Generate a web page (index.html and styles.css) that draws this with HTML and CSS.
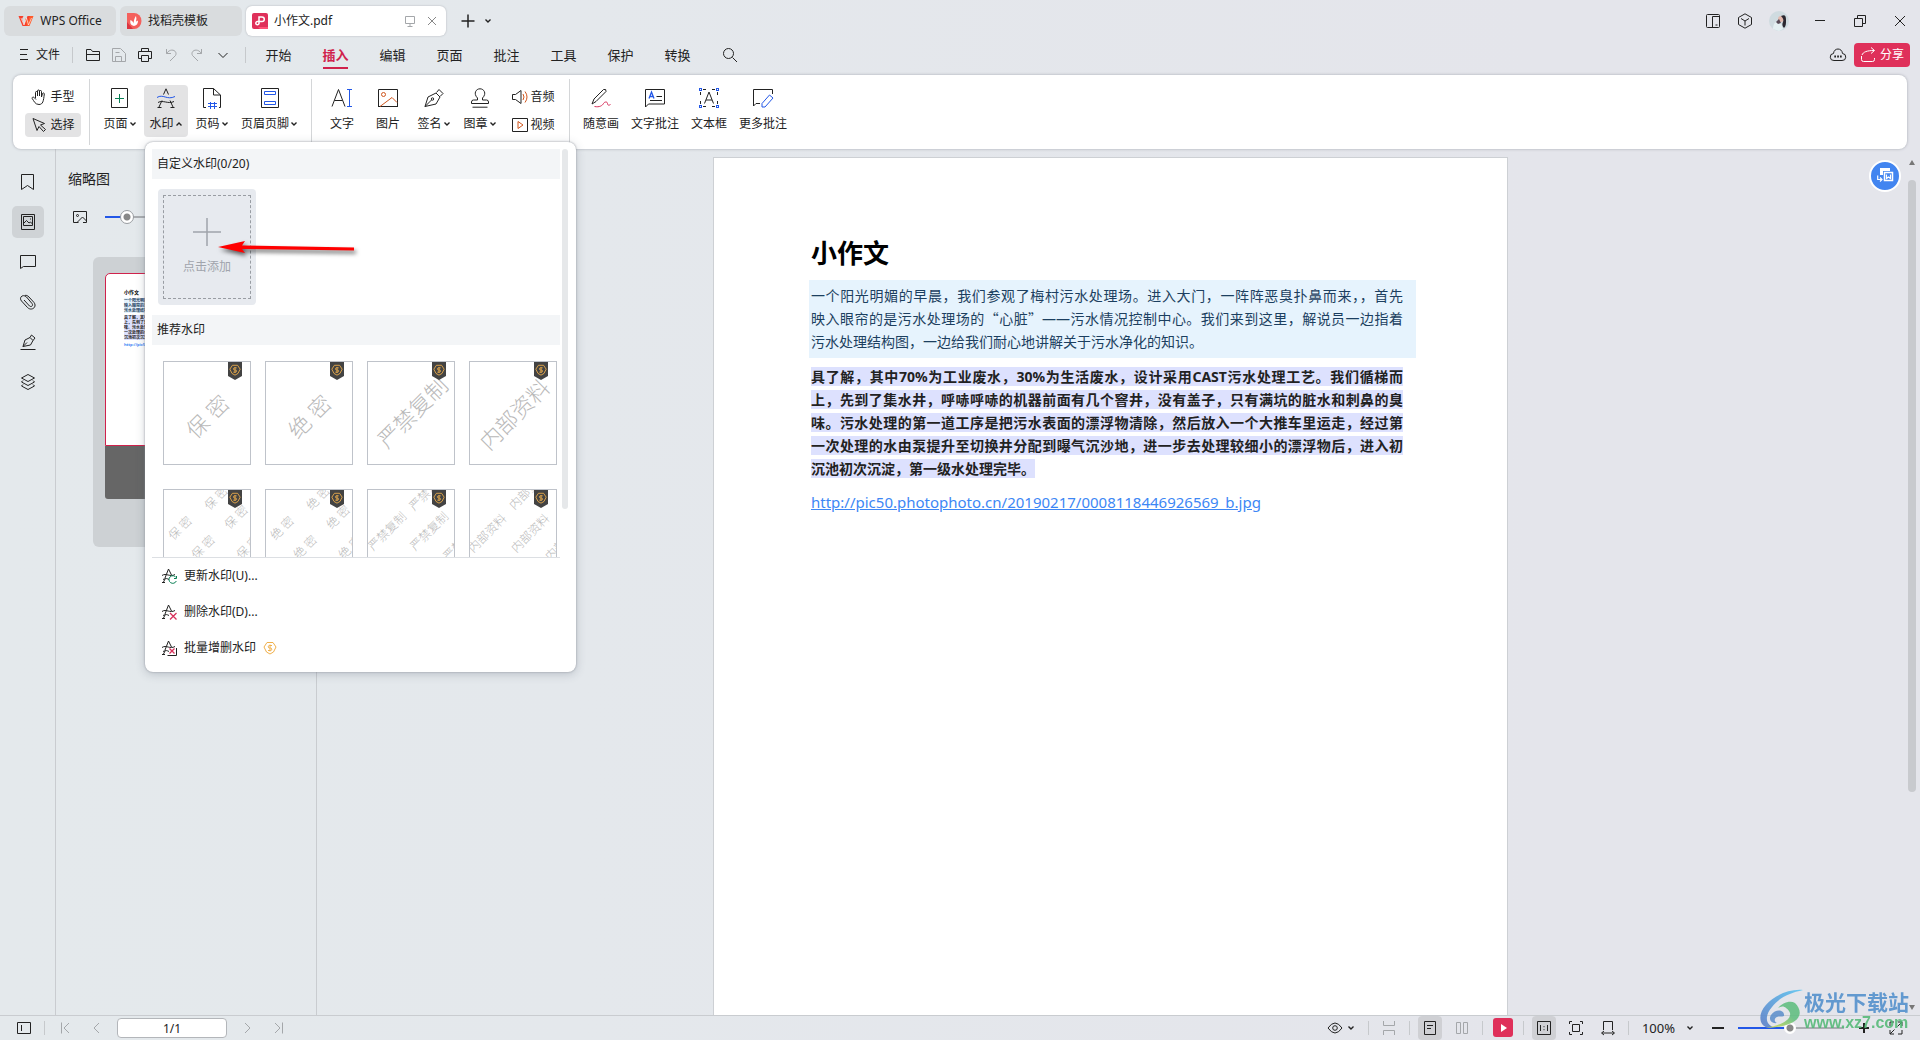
FILE: index.html
```html
<!DOCTYPE html>
<html lang="zh-CN">
<head>
<meta charset="utf-8">
<title>小作文.pdf - WPS Office</title>
<link rel="stylesheet" href="styles.css">
</head>
<body>
<svg class="defs" aria-hidden="true">
  <symbol id="down" viewBox="0 0 8 8"><path d="M1.5 2.5 4 5l2.5-2.5"/></symbol>
  <symbol id="up" viewBox="0 0 8 8"><path d="M1.5 5.500 4 3l2.500 2.500"/></symbol>
  <symbol id="coin" viewBox="0 0 14 14"><path d="M4 1.500h6L13 6l-2.500 5L7 13l-3.500-2L1 6z"/><path d="M9 4.500H6.500a1.200 1.200 0 0 0 0 2.500h1a1.200 1.200 0 0 1 0 2.500H5M7 3.500v7"/></symbol>
  <symbol id="mark" viewBox="0 0 16 16"><path d="M4 10 7.500 1 10.500 7M1 7.500c4-3 8 2 13-1M2 11.500c3-1.500 4-1 6 0M4 11 2.500 14M1 14.500h3"/></symbol>
</svg>

<header class="titlebar">
  <button class="tab"><svg class="ic" viewBox="0 0 16 16"><path d="M.5 3h5L4 6l2 6L9.500 3h3L9 13H4.500z" fill="#f5402c" stroke="none"/><path d="M7 6l2 7h2.500L15.500 3H12l-2 6L8.500 5z" fill="#ff5a2a" stroke="none"/><path d="M3 5l3 7 2.500-7 2 7L13.500 5" stroke="#fff" stroke-width=".6"/></svg>WPS Office</button>
  <button class="tab tab-docer"><svg class="ic" viewBox="0 0 16 16"><path d="M1 0h7a7.500 8 0 0 1 0 16H1z" fill="#f4605c" stroke="none"/><path d="M1 9l6 7H1z" fill="#dc3540" stroke="none"/><path d="M8 13C4 12 4 9 4.500 7 7 8 8 10 8 13c-1-4 .5-8 2-10 1 3 0 7-2 10 0-3 2-5 4-5.500 0 3-1 5-4 5.500z" fill="#fff" stroke="none"/></svg>找稻壳模板</button>
  <button class="tab tab-on"><svg class="ic" viewBox="0 0 16 16"><rect width="16" height="16" rx="2" fill="#df305a" stroke="none"/><path d="M8 16h8v-2H6z" fill="#ff5277" stroke="none"/><path d="M7 11V4h3a2.300 2.300 0 0 1 0 4.600H5.500a1.600 1.600 0 1 0 1.500 1.500" stroke="#fff" stroke-width="1.500"/></svg><span class="grow">小作文.pdf</span><svg class="ic faint" viewBox="0 0 16 16"><path d="M3.500 3.500h9v7h-9zM8 10.500v3M5.500 13.500h5"/></svg><svg class="ic faint" viewBox="0 0 16 16"><path d="M4 4l8 8M12 4l-8 8"/></svg></button>
  <button class="bare" aria-label="新建"><svg class="ic" viewBox="0 0 16 16"><path d="M8 1.500v13M1.500 8h13" stroke-width="1.500"/></svg></button>
  <button class="bare" aria-label="更多"><svg class="chev" viewBox="0 0 8 8"><use href="#down"/></svg></button>
  <span class="grow"></span>
  <div class="win">
    <button class="bare" aria-label="分栏"><svg class="ic" viewBox="0 0 16 16"><rect x="1.500" y="1.500" width="13" height="13" rx="1"/><path d="M7.500 15V3.500h7M10.500 12h2"/></svg></button>
    <button class="bare" aria-label="应用"><svg class="ic" viewBox="0 0 16 16"><path d="M8 .8l6.500 3.700v7L8 15.200 1.500 11.500v-7zM4 5.500 8 8l4-2.500M8 8v4.500"/></svg></button>
    <button class="bare" aria-label="账号"><svg class="avatar" viewBox="0 0 20 20"><circle cx="10" cy="10" r="10" fill="#cfdbe0"/><path d="M4 18c0-6 3-8 7-8l3 8-4 2z" fill="#e4f0f2"/><circle cx="12" cy="8" r="3" fill="#e2b9ae"/><path d="M12 5c4-2 5 0 5 4s0 6-2 8c-2-2-2-4-1-6s0-4-2-6z" fill="#2b2730"/><path d="M7 11l3-3 2 4-3 1z" fill="#574a56"/></svg></button>
  </div>
  <div class="win win-ctl">
    <button class="bare" aria-label="最小化"><svg class="ic" viewBox="0 0 16 16"><path d="M3 7.500h10"/></svg></button>
    <button class="bare" aria-label="还原"><svg class="ic" viewBox="0 0 16 16"><path d="M2.500 5.500h8v8h-8zM5.500 5.500v-3h8v8h-3"/></svg></button>
    <button class="bare" aria-label="关闭"><svg class="ic" viewBox="0 0 16 16"><path d="M3 3l10 10M13 3 3 13"/></svg></button>
  </div>
</header>

<nav class="menubar">
  <button class="file"><svg class="ic" viewBox="0 0 16 16"><path d="M4 2.500h8M4 7.500h7M4 12.500h8"/></svg>文件</button>
  <span class="sep"></span>
  <div class="quick">
    <button class="bare" aria-label="打开"><svg class="ic" viewBox="0 0 16 16"><path d="M1.500 13.500v-11h4.500l1.500 2h7v9zM1.500 7.500h13"/></svg></button>
    <button class="bare faint" aria-label="保存"><svg class="ic" viewBox="0 0 16 16"><path d="M1.500 14.500v-13h8l5 5v8zM4.500 5.500h4M4.500 14V9.500h6V14"/></svg></button>
    <button class="bare" aria-label="打印"><svg class="ic" viewBox="0 0 16 16"><path d="M4.500 4.500v-3h7v3M4 11.500H1.500v-7h13v7H12M4.500 8.500h7v6h-7z"/></svg></button>
    <button class="bare faint" aria-label="撤销"><svg class="ic" viewBox="0 0 16 16"><path d="M3.500 2v4.500H8M3.500 6.500C8 0 15 4 12.500 8.500L7 14"/></svg></button>
    <button class="bare faint" aria-label="恢复"><svg class="ic" viewBox="0 0 16 16"><path d="M12.500 2v4.500H8M12.500 6.500C8 0 1 4 3.500 8.500L9 14"/></svg></button>
    <button class="bare" aria-label="展开"><svg class="ic" viewBox="0 0 16 16"><path d="M3.500 6 8 10.500 12.500 6"/></svg></button>
  </div>
  <span class="sep"></span>
  <div class="menus">
    <button>开始</button><button class="on">插入</button><button>编辑</button><button>页面</button><button>批注</button><button>工具</button><button>保护</button><button>转换</button>
  </div>
  <button class="bare" aria-label="搜索"><svg class="ic" viewBox="0 0 16 16"><circle cx="6.500" cy="6.500" r="5"/><path d="M10.500 10.500 15 15"/></svg></button>
  <span class="grow"></span>
  <button class="bare" aria-label="云"><svg class="ic" viewBox="0 0 16 16"><path d="M4 13.500a3.500 3.500 0 0 1-.5-7C4 .5 12 .5 12.500 6.500a3.500 3.500 0 0 1-.5 7z"/><path d="M4.300 9.500h1.700M7.200 9.500h1.700M10 9.500h1.700" stroke-width="2"/></svg></button>
  <button class="share"><svg class="ic" viewBox="0 0 16 16"><path d="M1.500 9v3.500a2 2 0 0 0 2 2h9a2 2 0 0 0 2-2V11M2 8c1-3 5-4.500 12-4.500M11 .5l3.500 3-3.500 3"/></svg>分享</button>
</nav>

<section class="ribbon">
  <div class="stack">
    <button class="small"><svg class="ic" viewBox="0 0 16 16"><path d="M4.500 9V3.500a1 1 0 0 1 2 0V7M6.500 7V2a1 1 0 0 1 2 0v5M8.500 7V2.500a1 1 0 0 1 2 0V8M10.500 8l1-3.500c.5-1 2-.5 1.800.5C12.500 12 12 15.500 8 15.500 4 15.500 3 12 1.200 9.500c-.5-1 .8-2 2-1L5 10.500"/></svg>手型</button>
    <button class="small on"><svg class="ic" viewBox="0 0 16 16"><path d="M2 1.500l4 12 2-4 4.500 5 2-2-5-4.500 4-1.500z"/></svg>选择</button>
  </div>
  <span class="rule"></span>
  <div class="tools">
    <button class="big"><svg class="lg" viewBox="0 0 20 20"><path d="M1.500.5h16v19h-16z"/><path d="M9.500 6v9M5 10.500h9" stroke="#0a8055"/></svg><span>页面<svg class="chev" viewBox="0 0 8 8"><use href="#down"/></svg></span></button>
    <button class="big on"><svg class="lg" viewBox="0 0 20 20"><path d="M3 19 6 12.500M1.500 19.500h4M7.500 6.500 10 .8 12.500 6.500M14 12.500l3 6.500M14.500 19.500h4M2 14.500c5-3 10 2 16-1"/><path d="M1 9.500c6-4 10 3 18-1" stroke="#2257e7"/></svg><span>水印<svg class="chev" viewBox="0 0 8 8"><use href="#up"/></svg></span></button>
    <button class="big"><svg class="lg" viewBox="0 0 20 20"><path d="M4 19.500H1.500V.5h10l7 6.500v12.500H17M11.500.5V7h7"/><path d="M8.500 14v7M12.500 14v7M6 15.500h9M6 18.500h9" stroke="#2257e7"/></svg><span>页码<svg class="chev" viewBox="0 0 8 8"><use href="#down"/></svg></span></button>
    <button class="big"><svg class="lg" viewBox="0 0 20 20"><path d="M1.500.5h17v19h-17z"/><path d="M4.500 3.500h11v3h-11zM4.500 13.500h11v3h-11z" stroke="#2257e7"/></svg><span>页眉页脚<svg class="chev" viewBox="0 0 8 8"><use href="#down"/></svg></span></button>
  </div>
  <span class="rule"></span>
  <div class="tools">
    <button class="big"><svg class="lg" viewBox="0 0 20 20"><path d="M0 18.500 6.500 1.500 13 18.500M2.500 12.500h8"/><path d="M17.500 2v16M15 1.500h5M15 18.500h5" stroke="#2257e7"/></svg><span>文字</span></button>
    <button class="big"><svg class="lg" viewBox="0 0 20 20"><path d="M.5 19V1.500h19V19" /><path d="M.5 18.500H19"/><circle cx="5.500" cy="6.500" r="2" stroke="#d0561d"/><path d="M2 18.500l12-9 5 5" stroke="#d0561d"/></svg><span>图片</span></button>
    <button class="big"><svg class="lg" viewBox="0 0 20 20"><path d="M1 18.500 4 9l8-4 4 4-4 7zM1 18.500 7.500 12M12.500 4.500 15 1.500l4 4-3 3"/><circle cx="8.500" cy="11" r="1.200"/></svg><span>签名<svg class="chev" viewBox="0 0 8 8"><use href="#down"/></svg></span></button>
    <button class="big"><svg class="lg" viewBox="0 0 20 20"><path d="M7.500 10C3 5.500 6 .8 10 .8s7 4.700 2.500 9.200v2h4q2 0 2 2v1.500h-17V14q0-2 2-2h4zM2.500 19.200h15"/></svg><span>图章<svg class="chev" viewBox="0 0 8 8"><use href="#down"/></svg></span></button>
  </div>
  <div class="stack stack-next">
    <button class="small"><svg class="ic" viewBox="0 0 16 16"><path d="M.5 5.500H3.500l5.500-4v13l-5.500-4h-3z"/><path d="M11 5q2 3 0 6M13 2.500q4 5.500 0 11" stroke="#d0561d"/></svg>音频</button>
    <button class="small"><svg class="ic" viewBox="0 0 16 16"><path d="M.5 1.500h15v13H.5z"/><path d="M6 4.500v7L11 8z" stroke="#d0561d"/></svg>视频</button>
  </div>
  <span class="rule"></span>
  <div class="tools">
    <button class="big"><svg class="lg" viewBox="0 0 20 20"><path d="M1 16l2-5L12.500 1.500q3-1 2.500 2L5 13.500z"/><path d="M3.500 18.500c5 1 8-1 9-3s4-2 4 0 1.500 2 3 1" stroke="#d8315b"/></svg><span>随意画</span></button>
    <button class="big"><svg class="lg" viewBox="0 0 20 20"><path d="M.5 19V1.500h19v14.500H3.500zM11.500 8.500H17M5 12.500h12"/><path d="M4 10.500 6.500 4 9 10.500M5 8.500h3" stroke="#2257e7" stroke-width="1.300"/></svg><span>文字批注</span></button>
    <button class="big"><svg class="lg" viewBox="0 0 20 20"><path d="M4 1.500h12M4 18.500h12M1.500 4v12M18.500 4v12" stroke-dasharray="3 6"/><path d="M5.500 15.500 10 4l4.500 11.500M7 12h6"/><g stroke="#2257e7"><rect x=".5" y=".5" width="2" height="2"/><rect x="17.500" y=".5" width="2" height="2"/><rect x=".5" y="17.500" width="2" height="2"/><rect x="17.500" y="17.500" width="2" height="2"/></g></svg><span>文本框</span></button>
    <button class="big"><svg class="lg" viewBox="0 0 20 20"><path d="M19.500 6V1.500H.5V18l2.500-2.500h4"/><path d="M9 19v-3.500L16.500 7l3.500 3-8 9z" stroke="#2257e7"/></svg><span>更多批注</span></button>
  </div>

  <div class="popup">
    <div class="gallery">
      <div class="gallery-body">
        <h2>自定义水印(0/20)</h2>
        <button class="add"><span><svg class="plus" viewBox="0 0 28 28"><path d="M14 0v28M0 14h28"/></svg>点击添加</span></button>
        <h2>推荐水印</h2>
        <div class="tiles">
          <button class="tile"><svg class="art" viewBox="0 0 86 102"><text class="wm" transform="translate(43 54) rotate(-45)">保 密</text></svg><i class="badge"><svg viewBox="0 0 14 14"><use href="#coin"/></svg></i></button>
          <button class="tile"><svg class="art" viewBox="0 0 86 102"><text class="wm" transform="translate(43 54) rotate(-45)">绝 密</text></svg><i class="badge"><svg viewBox="0 0 14 14"><use href="#coin"/></svg></i></button>
          <button class="tile"><svg class="art" viewBox="0 0 86 102"><text class="wm" transform="translate(44 50) rotate(-45)">严禁复制</text></svg><i class="badge"><svg viewBox="0 0 14 14"><use href="#coin"/></svg></i></button>
          <button class="tile"><svg class="art" viewBox="0 0 86 102"><text class="wm" transform="translate(44 52) rotate(-45)">内部资料</text></svg><i class="badge"><svg viewBox="0 0 14 14"><use href="#coin"/></svg></i></button>
          <button class="tile"><svg class="art" viewBox="0 0 86 102"><g class="wms"><text transform="translate(16 38) rotate(-45)">保 密</text><text transform="translate(52 8) rotate(-45)">保 密</text><text transform="translate(72 27) rotate(-45)">保 密</text><text transform="translate(39 57) rotate(-45)">保 密</text><text transform="translate(84 57) rotate(-45)">保 密</text></g></svg><i class="badge"><svg viewBox="0 0 14 14"><use href="#coin"/></svg></i></button>
          <button class="tile"><svg class="art" viewBox="0 0 86 102"><g class="wms"><text transform="translate(16 38) rotate(-45)">绝 密</text><text transform="translate(52 8) rotate(-45)">绝 密</text><text transform="translate(72 27) rotate(-45)">绝 密</text><text transform="translate(39 57) rotate(-45)">绝 密</text><text transform="translate(84 57) rotate(-45)">绝 密</text></g></svg><i class="badge"><svg viewBox="0 0 14 14"><use href="#coin"/></svg></i></button>
          <button class="tile"><svg class="art" viewBox="0 0 86 102"><g class="wms"><text transform="translate(19 41) rotate(-45)">严禁复制</text><text transform="translate(61 41) rotate(-45)">严禁复制</text><text transform="translate(60 1) rotate(-45)">严禁复制</text><text transform="translate(94 51) rotate(-45)">严禁复制</text></g></svg><i class="badge"><svg viewBox="0 0 14 14"><use href="#coin"/></svg></i></button>
          <button class="tile"><svg class="art" viewBox="0 0 86 102"><g class="wms"><text transform="translate(17 43) rotate(-45)">内部资料</text><text transform="translate(60 43) rotate(-45)">内部资料</text><text transform="translate(58 0) rotate(-45)">内部资料</text><text transform="translate(94 51) rotate(-45)">内部资料</text></g></svg><i class="badge"><svg viewBox="0 0 14 14"><use href="#coin"/></svg></i></button>
        </div>
      </div>
      <span class="gallery-bar"></span>
    </div>
    <div class="actions">
      <button><svg class="ic" viewBox="0 0 16 16"><use href="#mark"/><path d="M15 9.500A3.800 3.800 0 1 0 15.300 13M15.500 8v2.500H13" stroke="#0a8055"/></svg>更新水印(U)...</button>
      <button><svg class="ic" viewBox="0 0 16 16"><use href="#mark"/><path d="M9 9l6.500 6.500M15.500 9 9 15.500" stroke="#d8315b" stroke-width="1.300"/></svg>删除水印(D)...</button>
      <button><svg class="ic" viewBox="0 0 16 16"><use href="#mark"/><path d="M6.500 15.500h9V8"/><path d="M8.500 8.500l5 5M13.500 8.500l-5 5" stroke="#d8315b" stroke-width="1.300"/></svg>批量增删水印<svg class="coin" viewBox="0 0 14 14"><use href="#coin"/></svg></button>
    </div>
    <svg class="arrow" viewBox="0 0 140 24"><path d="M0 7 27 1 24 5.500 136 7.500V10.500L24 9 27 13z"/></svg>
  </div>
</section>

<main class="work">
  <aside class="rail">
    <button aria-label="书签"><svg class="ic" viewBox="0 0 16 16"><path d="M1.500.5h12v15l-6-4-6 4z"/></svg></button>
    <button class="on" aria-label="缩略图"><svg class="ic" viewBox="0 0 16 16"><path d="M1.500.5h13v15h-13zM3.500 2.500h9v9h-9zM3.500 9.500l3-3 2.500 2.500 1.500-1 2 2"/><path d="M10 5h1"/></svg></button>
    <button aria-label="批注"><svg class="ic" viewBox="0 0 16 16"><path d="M.5 1.500h15v11H3.500L.5 14.500z"/></svg></button>
    <button aria-label="附件"><svg class="ic" viewBox="0 0 16 16"><path d="M4 6l5.500 6c2 1.500 4-.5 2.500-2.500L6.500 3C3-.5-1.500 3.500 1.500 7l6 6.500c4 4 10-.5 6.500-5L9 3C7.500 1.500 6 1 5 1.500"/></svg></button>
    <button aria-label="签名"><svg class="ic" viewBox="0 0 16 16"><path d="M.5 15.500h15M3 12.500 5 6l5-2.500 3 3L10.500 11zM3 12.500 7 8.500M10 3.500l1.500-2.500L15 4l-2 2.500"/></svg></button>
    <button aria-label="图层"><svg class="ic" viewBox="0 0 16 16"><path d="M8 .5l6.500 3.500L8 7.500 1.500 4zM3 6.500 1.500 8 8 11.500 14.500 8 13 6.500M3 10.500 1.500 12 8 15.500l6.500-3.500-1.500-1.500"/></svg></button>
  </aside>
  <aside class="panel">
    <h2>缩略图</h2>
    <div class="zoomrow"><svg class="ic" viewBox="0 0 16 16"><path d="M1.500 2.500h13v11H11M6.500 13.500h-5v-11M5 13.500l5.500-5.500 4 4"/><circle cx="5.500" cy="6.500" r="1"/></svg><input class="range" type="range" aria-label="缩略图大小" value="11"></div>
    <div class="thumb">
      <div class="mini"><h3>小作文</h3><p class="blue">一个阳光明媚的早晨，<br>映入眼帘的是污水处理<br>污水处理结构图，一边</p><p class="dark">具了解，其中70%为工<br>上，先到了集水井，呼<br>味。污水处理的第一道<br>一次处理的水由泵提升<br>沉池初次沉淀，第一级</p><p class="url">http://pic50.photophoto</p></div>
      <div class="shade"></div>
    </div>
  </aside>
  <section class="canvas">
    <article class="page">
      <h1>小作文</h1>
      <p class="quote">一个阳光明媚的早晨，我们参观了梅村污水处理场。进入大门，一阵阵恶臭扑鼻而来，，首先<br>映入眼帘的是污水处理场的<span class="cjk">“心脏”</span>——污水情况控制中心。我们来到这里，解说员一边指着<br><span class="last">污水处理结构图，一边给我们耐心地讲解关于污水净化的知识。</span></p>
      <p class="strong"><mark>具了解，其中70%为工业废水，30%为生活废水，设计采用CAST污水处理工艺。我们循梯而<br>上，先到了集水井，呼哧呼哧的机器前面有几个窨井，没有盖子，只有满坑的脏水和刺鼻的臭<br>味。污水处理的第一道工序是把污水表面的漂浮物清除，然后放入一个大推车里运走，经过第<br>一次处理的水由泵提升至切换井分配到曝气沉沙地，进一步去处理较细小的漂浮物后，进入初</mark><span class="last"><mark>沉池初次沉淀，第一级水处理完毕。</mark></span></p>
      <p class="link"><a href="http://pic50.photophoto.cn/20190217/0008118446926569_b.jpg">http://pic50.photophoto.cn/20190217/0008118446926569_b.jpg</a></p>
    </article>
    <button class="float" aria-label="转换为Word"><svg viewBox="0 0 16 16"><path d="M3 0h10v3H6v4H3z" fill="#fff"/><path d="M7.500 4.500h8v8h-8z" fill="none" stroke="#fff" stroke-width="1.500"/><path d="M9.500 6.500v4l2-1.500 2 1.500v-4M.7 7.500v4h4M3 9.500l2 2-2 2" fill="none" stroke="#fff" stroke-width="1.200"/></svg></button>
  </section>
  <div class="vbar"><span class="tri-up"></span><span class="vthumb"></span><span class="tri-down"></span></div>
</main>

<footer class="status">
  <button aria-label="侧栏"><svg class="ic" viewBox="0 0 16 16"><path d="M1.500 2.500h13v11h-13zM5.500 5v6"/></svg></button>
  <span class="sep"></span>
  <button class="faint" aria-label="首页"><svg class="ic" viewBox="0 0 16 16"><path d="M4.500 2.500v11M12 3 7 8l5 5"/></svg></button>
  <button class="faint" aria-label="上一页"><svg class="ic" viewBox="0 0 16 16"><path d="M10 3 5 8l5 5"/></svg></button>
  <input class="pageno" type="text" value="1/1" aria-label="页码">
  <button class="faint" aria-label="下一页"><svg class="ic" viewBox="0 0 16 16"><path d="M6 3l5 5-5 5"/></svg></button>
  <button class="faint" aria-label="末页"><svg class="ic" viewBox="0 0 16 16"><path d="M4 3l5 5-5 5M11.500 2.500v11"/></svg></button>
  <span class="grow"></span>
  <button class="eye" aria-label="护眼模式"><svg class="ic" viewBox="0 0 16 16"><path d="M1 8q7-10 14 0-7 10-14 0z"/><circle cx="8" cy="8" r="2.300"/></svg><svg class="chev" viewBox="0 0 8 8"><use href="#down"/></svg></button>
  <span class="sep"></span>
  <button class="faint" aria-label="连续"><svg class="ic" viewBox="0 0 16 16"><path d="M2.500 1v4.500h11V1M2.500 15v-4.500h11V15"/></svg></button>
  <span class="sep"></span>
  <button class="on" aria-label="单页"><svg class="ic" viewBox="0 0 16 16"><path d="M2.500 1.500h11v13h-11zM5 5.500h6M5 8.500h4"/></svg></button>
  <button class="faint" aria-label="双页"><svg class="ic" viewBox="0 0 16 16"><path d="M2.500 2.500h4v11h-4zM9.500 2.500h4v11h-4z"/></svg></button>
  <span class="sep"></span>
  <button aria-label="播放"><svg class="play" viewBox="0 0 20 20"><rect width="20" height="19" rx="3" fill="#df305a"/><path d="M8 6v8l6-4z" fill="#fff"/></svg></button>
  <span class="sep"></span>
  <button class="on" aria-label="实际大小"><svg class="ic" viewBox="0 0 16 16"><path d="M1.500 1.500h13v13h-13zM4.500 5v6M11.500 5v6M8 6.200v1M8 9.200v1"/></svg></button>
  <button aria-label="适合页面"><svg class="ic" viewBox="0 0 16 16"><path d="M1.500 4V1.500H4M12 1.500h2.500V4M14.500 12v2.500H12M4 14.500H1.500V12M4.500 4.500h7v7h-7z"/></svg></button>
  <button aria-label="适合宽度"><svg class="ic" viewBox="0 0 16 16"><path d="M3.500 10V1.500h9V10M2 13h12M4 11l-2.500 2L4 15M12 11l2.500 2L12 15"/></svg></button>
  <span class="sep"></span>
  <button class="pct">100%<svg class="chev" viewBox="0 0 8 8"><use href="#down"/></svg></button>
  <button aria-label="缩小"><svg class="ic" viewBox="0 0 16 16"><path d="M2 8h12" stroke-width="2"/></svg></button>
  <input class="range range-zoom" type="range" aria-label="缩放" value="49">
  <button aria-label="放大"><svg class="ic" viewBox="0 0 16 16"><path d="M3 8h10M8 3v10" stroke-width="2"/></svg></button>
  <button aria-label="全屏"><svg class="ic" viewBox="0 0 16 16"><path d="M2 6V2h4M10 2h4v4M14 10v4h-4M6 14H2v-4M14 2l-4.500 4.500M2 14l4.500-4.500"/></svg></button>
</footer>

<div class="site">
  <svg class="swirl" viewBox="0 0 44 42"><defs><linearGradient id="sw" x1="0" y1="1" x2="1" y2="0"><stop offset="0" stop-color="#5477c4"/><stop offset="1" stop-color="#55c4f2"/></linearGradient><linearGradient id="sg" x1="0" y1="1" x2="1" y2="0"><stop offset="0" stop-color="#e6e04a"/><stop offset=".6" stop-color="#5bbd7c"/></linearGradient></defs><path d="M43 1C20-1-4 18 1 33c2 5 8 7 12 5-8-3-8-12-1-20C20 8 30 4 43 1z" fill="url(#sw)"/><path d="M24 27c1-6-8-8-13-1-3 5 1 9 6 8-3-1-3-5 0-6 2-1 5 0 7-1z" fill="#5b8ecb"/><path d="M35 14c10 10 6 24-30 25 20-3 32-12 21-20-2-2-5-2-8 0 4-5 12-8 17-5z" fill="url(#sg)"/></svg>
  <div class="site-name"><b>极光下载站</b><span>www.xz7.com</span></div>
</div>
</body>
</html>
```
FILE: styles.css
```css
* { box-sizing: border-box; }
html, body { height: 100%; }
body {
  margin: 0;
  display: flex;
  flex-direction: column;
  position: relative;
  overflow: hidden;
  background: linear-gradient(90deg, #e4e9ec, #e4e8ec 30%, #e4e5eb 80%);
  color: #222;
  font: 12px/16px "Noto Sans", "Noto Sans CJK SC", sans-serif;
}
button {
  display: flex;
  align-items: center;
  justify-content: center;
  padding: 0;
  border: 0;
  background: none;
  color: inherit;
  font: inherit;
  white-space: nowrap;
}
h1, h2, h3, p { margin: 0; }
svg { display: block; flex: none; fill: none; stroke: currentColor; overflow: visible; }
text { fill: #b9b9b9; stroke: none; }
.defs { position: absolute; width: 0; height: 0; }
.ic { width: 16px; height: 16px; }
.lg { width: 20px; height: 20px; }
.chev { width: 8px; height: 8px; stroke-width: 1.400; }
.faint { color: #a4a7aa; }
.grow { flex: 1; text-align: left; }
.sep { width: 1px; height: 16px; background: #c6c9cc; }

/* title bar */
.titlebar { display: flex; align-items: center; height: 41px; padding: 0 4px; }
.tab {
  gap: 6px;
  width: 112px;
  height: 30px;
  margin-right: 4px;
  border-radius: 6px;
  background: #d9dcde;
}
.tab-docer { width: 122px; justify-content: flex-start; padding-left: 6px; }
.tab-on {
  width: 200px;
  margin-right: 14px;
  padding: 0 6px;
  background: #fff;
  box-shadow: 0 0 2px #aaadb3;
}
.tab-on .faint + .faint { color: #888; }
.bare { min-width: 16px; height: 24px; margin-right: 4px; }
.win { display: flex; gap: 16px; margin-right: 23px; }
.win .bare, .win-ctl .bare { margin: 0; }
.avatar { width: 20px; height: 20px; stroke: none; }
.win-ctl { gap: 24px; margin-right: 8px; }

/* menu bar */
.menubar { display: flex; align-items: center; height: 28px; padding: 0 10px 0 16px; }
.file { gap: 4px; margin-right: 12px; }
.quick { display: flex; gap: 10px; margin: 0 14px 0 12px; }
.quick .bare { margin: 0; }
.menus { display: flex; align-self: stretch; margin: 0 16px 0 4px; }
.menus button { width: 57px; height: 28px; font-size: 13px; position: relative; }
.menus .on { color: #d0224c; font-weight: 700; }
.menus .on::after { content: ""; position: absolute; left: 16px; right: 16px; bottom: 0; height: 2px; background: #d0224c; }
.share { gap: 4px; width: 56px; height: 24px; margin-left: 4px; border-radius: 4px; background: #df305a; color: #fff; }

/* ribbon */
.ribbon {
  position: relative;
  z-index: 2;
  display: flex;
  flex: none;
  height: 74px;
  margin: 6px 13px 0;
  padding: 4px 12px;
  border-radius: 8px;
  background: #fff;
  box-shadow: 0 0 3px #a5a8b0;
}
.rule { width: 1px; margin: 0 8px; background: #d4d6d8; }
.stack { display: flex; flex-direction: column; gap: 4px; padding-top: 6px; }
.stack-next { margin-left: 3px; }
.small { gap: 3px; width: 56px; height: 24px; border-radius: 4px; }
.tools { display: flex; gap: 2px; padding-top: 6px; }
.big { flex-direction: column; gap: 8px; min-width: 44px; height: 52px; padding: 0 5px 2px; border-radius: 4px; }
.big span { display: flex; align-items: center; gap: 1px; }
.small.on, .big.on { background: #e3e3e4; }

/* watermark popup */
.popup {
  position: absolute;
  left: 132px;
  top: 67px;
  width: 431px;
  padding: 7px 8px 5px 7px;
  border-radius: 8px;
  background: #fff;
  box-shadow: 0 0 2px #8d929a, 0 2px 10px rgba(60, 70, 90, .25);
}
.gallery { display: flex; gap: 2px; height: 409px; }
.gallery-body { flex: none; width: 408px; overflow: hidden; border-bottom: 1px solid #dcdfe3; }
.gallery-bar { width: 6px; height: 360px; border-radius: 3px; background: #e6e8ea; }
.gallery h2 { height: 30px; padding-left: 5px; background: #f3f5f7; font-size: 12px; font-weight: 400; line-height: 30px; }
.add { width: 98px; height: 116px; margin: 10px 6px; padding: 6px 5px; border-radius: 4px; background: #e7eaef; color: #a0a4ac; }
.add span {
  display: flex;
  flex-direction: column;
  align-items: center;
  gap: 13px;
  width: 100%;
  height: 100%;
  padding-top: 22px;
  border: 1px dashed #999da3;
}
.plus { width: 28px; height: 28px; stroke-width: 1.500; }
.tiles { display: grid; grid-template-columns: repeat(4, 88px); gap: 24px 14px; padding: 16px 11px; }
.tile { position: relative; height: 104px; border: 1px solid #bfc3ca; overflow: hidden; }
.art { width: 86px; height: 102px; overflow: hidden; }
.art text { text-anchor: middle; dominant-baseline: central; font-weight: 300; }
.wm { font-size: 22px; }
.wms { font-size: 12px; }
.badge {
  position: absolute;
  top: 0;
  right: 8px;
  width: 14px;
  height: 18px;
  padding: 2px 1px;
  background: #434343;
  color: #f0b04c;
  clip-path: polygon(0 0, 100% 0, 100% 78%, 50% 100%, 0 78%);
}
.badge svg { width: 12px; height: 12px; }
.coin { width: 14px; height: 14px; color: #f0b04c; }
.actions button { gap: 7px; height: 36px; padding-left: 9px; }
.actions { padding-bottom: 1px; }
.arrow { position: absolute; left: 73px; top: 98px; width: 140px; height: 24px; fill: #f00; stroke: none; filter: drop-shadow(2px 3px 2px rgba(0, 0, 0, .6)); }

/* work area */
.work { display: flex; flex: 1; min-height: 0; }
.rail { display: flex; flex-direction: column; align-items: center; gap: 8px; width: 56px; padding-top: 17px; border-right: 1px solid #c9ccd0; }
.rail button { width: 32px; height: 32px; border-radius: 5px; }
.rail .on { background: #cfd3d6; }
.panel { width: 261px; padding: 20px 12px 0; border-right: 1px solid #c9ccd0; }
.panel h2 { font-size: 14px; font-weight: 400; line-height: 20px; }
.zoomrow { display: flex; align-items: center; gap: 17px; height: 16px; margin: 20px 0 32px 4px; }
.range { appearance: none; width: 150px; height: 14px; margin: 0; background: linear-gradient(90deg, #2257e7 15%, #aaadb1 15%) center / 100% 2px no-repeat; }
.range::-webkit-slider-thumb { appearance: none; width: 14px; height: 14px; border: 1px solid #9a9da1; border-radius: 50%; background: radial-gradient(#888 3px, #fff 4px); }
.thumb { height: 290px; margin: 0 12px 0 25px; padding: 16px 12px; border-radius: 6px; background: #cdd1d4; }
.mini { height: 173px; padding: 14px 0 0 18px; border: 1px solid #d0224c; border-radius: 5px 5px 0 0; background: #fff; overflow: hidden; font-size: 4px; line-height: 5px; white-space: nowrap; }
.mini h3 { margin-bottom: 2px; font-size: 5px; line-height: 8px; color: #000; }
.mini p { margin-bottom: 2px; font-weight: 700; }
.blue { color: #1c3d5e; background: #e6f3fd; }
.dark { color: #222; background: #dde1fe; }
.url { color: #3d87f5; }
.shade { height: 53px; border-radius: 0 0 3px 3px; background: #666; }

.canvas { position: relative; display: flex; flex: 1; justify-content: center; padding-top: 8px; }
.page { width: 795px; padding: 76px 97px; background: #fff; border: 1px solid #cdd0d4; border-bottom: 0; }
.page h1 { color: #000; font-size: 26px; line-height: 38px; }
.page p { width: 592px; font-size: 14px; line-height: 23px; text-align: justify; text-align-last: justify; white-space: nowrap; }
.page .quote { width: 607px; margin: 8px 0 7px -2px; padding: 4px 13px 5px 2px; background: #e6f3fd; color: #1c3f60; }
.page .cjk { font-family: "Noto Sans CJK SC", sans-serif; }
.page .last { display: block; text-align-last: left; }
.page .strong { font-weight: 700; }
mark { background: #dde1fe; color: #222; }
.page .link { margin-top: 11px; font-size: 15px; text-align-last: left; }
.page a { color: #3d87f5; }
.float { position: absolute; right: 3px; top: 11px; width: 32px; height: 32px; border: 2px solid #fff; border-radius: 50%; background: #4285f0; }
.float svg { width: 16px; height: 16px; stroke: none; }
.vbar { display: flex; flex-direction: column; align-items: center; width: 16px; padding: 11px 0 5px; }
.vthumb { width: 8px; height: 72%; margin: 15px 0 auto; border-radius: 4px; background: #c8cace; }
.tri-up, .tri-down { border: 3px solid transparent; }
.tri-up { border-width: 0 3px 5px; border-bottom-color: #777; }
.tri-down { border-width: 5px 3px 0; border-top-color: #777; }

/* status bar */
.status { display: flex; align-items: center; gap: 8px; height: 25px; padding: 0 12px; border-top: 1px solid #c9ccd0; }
.status button { width: 24px; height: 24px; }
.status .on { border-radius: 4px; background: #cfd0d4; }
.status .sep { height: 14px; }
.status .eye { gap: 4px; width: 38px; }
.status .pct { justify-content: flex-end; gap: 11px; width: 61px; padding-right: 4px; font-size: 13px; }
.pageno { width: 110px; height: 20px; padding: 0; border: 1px solid #b3b6ba; border-radius: 4px; background: #fff; color: #222; font: inherit; text-align: center; }
.play { width: 20px; height: 20px; stroke: none; }
.range-zoom { width: 106px; background-image: linear-gradient(90deg, #2257e7 49%, #aaadb1 49%); }
.range-zoom::-webkit-slider-thumb { width: 12px; height: 12px; border-color: #fff; }

/* site mark */
.site { position: absolute; z-index: 3; right: 11px; bottom: 9px; display: flex; gap: 0; opacity: .85; pointer-events: none; }
.swirl { width: 44px; height: 42px; stroke: none; }
.site-name { display: flex; flex-direction: column; }
.site b { color: #4c8ccb; font-size: 21px; line-height: 26px; }
.site span { color: #4fb873; font: 700 16px/16px "Liberation Sans", sans-serif; }
```
